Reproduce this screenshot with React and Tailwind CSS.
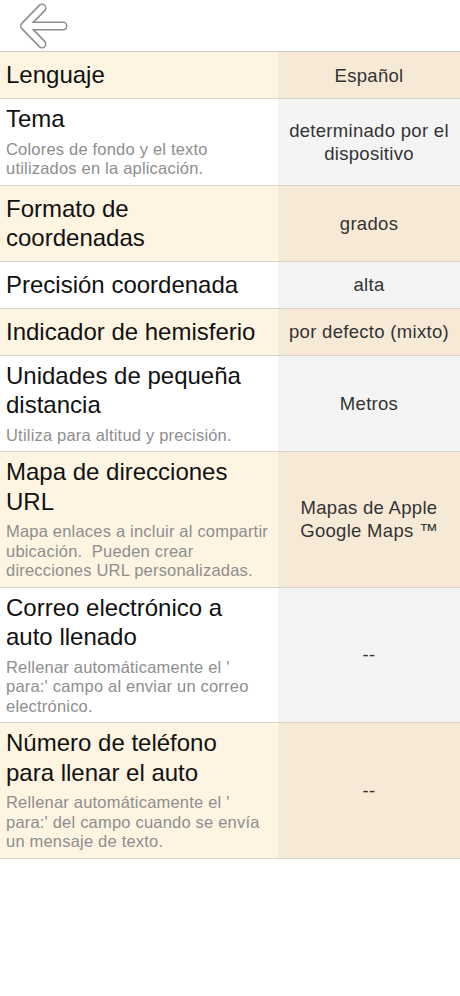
import React from 'react';

const rows = [
  { title: 'Lenguaje', value: 'Español', cream: true },
  {
    title: 'Tema',
    sub: 'Colores de fondo y el texto utilizados en la aplicación.',
    value: 'determinado por el dispositivo',
  },
  { title: 'Formato de coordenadas', value: 'grados', cream: true },
  { title: 'Precisión coordenada', value: 'alta' },
  { title: 'Indicador de hemisferio', value: 'por defecto (mixto)', cream: true },
  {
    title: 'Unidades de pequeña distancia',
    sub: 'Utiliza para altitud y precisión.',
    value: 'Metros',
  },
  {
    title: 'Mapa de direcciones URL',
    sub: 'Mapa enlaces a incluir al compartir ubicación.\u00a0 Pueden crear direcciones URL personalizadas.',
    value: ['Mapas de Apple', 'Google Maps ™'],
    cream: true,
  },
  {
    title: 'Correo electrónico a auto llenado',
    sub: "Rellenar automáticamente el ' para:' campo al enviar un correo electrónico.",
    value: '--',
  },
  {
    title: 'Número de teléfono para llenar el auto',
    sub: "Rellenar automáticamente el ' para:' del campo cuando se envía un mensaje de texto.",
    value: '--',
    cream: true,
  },
];

function BackArrow() {
  return (
    <svg width="56" height="52" viewBox="0 0 56 52" fill="none" strokeLinecap="round" strokeLinejoin="round">
      <g stroke="#8c8c8c" strokeWidth="9">
        <path d="M27 8 L9.5 26 L27 44" />
        <path d="M11 26 H48" />
      </g>
      <g stroke="#ffffff" strokeWidth="6">
        <path d="M27 8 L9.5 26 L27 44" />
        <path d="M11 26 H48" />
      </g>
    </svg>
  );
}

function Row({ row }) {
  const left = row.cream ? 'bg-[#fef4e2]' : 'bg-white';
  const right = row.cream ? 'bg-[#f6ead7]' : 'bg-[#f4f4f4]';
  return (
    <div className="grid grid-cols-[278px_1fr] border-b border-[#d8d4cd]">
      <div
        className={`${left} px-[6px] flex flex-col justify-center ${
          row.sub ? 'pt-[5px] pb-[6px]' : 'py-2 min-h-[46px]'
        }`}
      >
        <div className="max-w-[262px] text-[24px] leading-[29.5px] text-[#111]">{row.title}</div>
        {row.sub && (
          <div className="mt-[6px] text-[16.5px] leading-[19.5px] tracking-[0.2px] text-[#8e8e8e]">
            {row.sub}
          </div>
        )}
      </div>
      <div
        className={`${right} flex flex-col items-center justify-center text-center text-[18.5px] leading-[23px] tracking-[0.3px] text-[#333]`}
      >
        {Array.isArray(row.value) ? (
          row.value.map((v) => <div key={v}>{v}</div>)
        ) : (
          <div className="max-w-[170px]">{row.value}</div>
        )}
      </div>
    </div>
  );
}

export default function App() {
  return (
    <div
      className="w-[460px] h-[996px] bg-white"
      style={{ fontFamily: '"Liberation Sans", Arial, sans-serif' }}
    >
      <div className="h-[52px] flex items-center pl-[15px] border-b border-[#cfcac2]">
        <BackArrow />
      </div>
      {rows.map((row) => (
        <Row key={row.title} row={row} />
      ))}
    </div>
  );
}
